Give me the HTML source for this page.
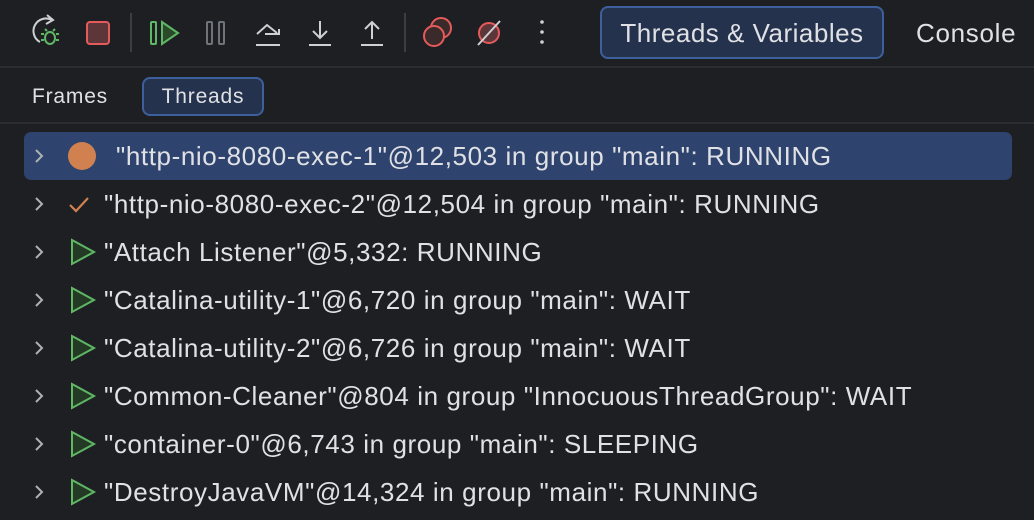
<!DOCTYPE html>
<html><head><style>
body{margin:0;width:1034px;height:520px;background:#1e1f22;overflow:hidden;font-family:"Liberation Sans",sans-serif;color:#dfe1e5;position:relative}
.a{position:absolute}
.sep{position:absolute;left:0;width:1034px;height:2px;background:#2b2d30}
.pill{position:absolute;background:#25324d;border:2px solid #3d5f9c;border-radius:8px;box-sizing:border-box;color:#dfe1e5;text-align:center}
.row{position:absolute;left:24px;width:988px;height:48px;font-size:26px;letter-spacing:0.6px;line-height:49px;white-space:nowrap}
.row.sel{background:#2e436e;border-radius:7px}
.row svg{position:absolute}
.row span{position:absolute;left:80px}
</style></head><body>
<svg class="a" style="left:0;top:0" width="580" height="66" fill="none" stroke-width="2">
<path d="M52 20 A10 10 0 1 0 40 42" stroke="#ced0d6"/><path d="M47 15 L53 20 L46 24" stroke="#ced0d6"/>
<ellipse cx="50" cy="38" rx="5" ry="6" stroke="#5fb865"/><path d="M44 34h-3M56 34h3M44 40h-3M56 40h3M47 31l-2-2M53 31l2-2" stroke="#5fb865"/>
<rect x="87" y="22" width="22" height="22" rx="3" fill="#5c3638" stroke="#e55b5b"/>
<line x1="131" y1="13" x2="131" y2="52" stroke="#3c3f41"/>
<rect x="151" y="22" width="5" height="22" rx="1" stroke="#5fb865"/><path d="M162 22 L178 33 L162 44Z" fill="#2a4a2a" stroke="#5fb865"/>
<rect x="207" y="22" width="5" height="22" rx="1" stroke="#6f737a"/><rect x="219" y="22" width="5" height="22" rx="1" stroke="#6f737a"/>
<path d="M257 34 L267 25 L277 33" stroke="#ced0d6"/><path d="M265 34 L279 34 L279 29" stroke="#ced0d6"/><line x1="256" y1="45" x2="280" y2="45" stroke="#ced0d6"/>
<path d="M320 21v17M313 31l7 7 7-7M309 45h22" stroke="#ced0d6"/>
<path d="M372 22v17M365 29l7-7 7 7M361 45h22" stroke="#ced0d6"/>
<line x1="405" y1="13" x2="405" y2="52" stroke="#3c3f41"/>
<circle cx="441" cy="28" r="10" fill="#3a2a2a" stroke="#e55b5b"/><circle cx="434" cy="36" r="10" fill="#3a2a2a" stroke="#e55b5b"/>
<circle cx="489" cy="33" r="10" fill="#5c3638" stroke="#e55b5b"/><line x1="478" y1="45" x2="500" y2="21" stroke="#ced0d6"/>
<circle cx="542" cy="22" r="1.8" fill="#ced0d6" stroke="none"/><circle cx="542" cy="32" r="1.8" fill="#ced0d6" stroke="none"/><circle cx="542" cy="42" r="1.8" fill="#ced0d6" stroke="none"/>
</svg>
<div class="pill" style="left:600px;top:6px;width:284px;height:53px;line-height:50px;font-size:26px;letter-spacing:0.5px">Threads &amp; Variables</div>
<div class="a" style="left:916px;top:6px;line-height:55px;font-size:26px;letter-spacing:0.7px">Console</div>
<div class="sep" style="top:66px"></div>
<div class="a" style="left:32px;top:78px;line-height:38px;font-size:21px;letter-spacing:0.8px">Frames</div>
<div class="pill" style="left:142px;top:77px;width:122px;height:39px;line-height:36px;font-size:21px;letter-spacing:0.8px">Threads</div>
<div class="sep" style="top:122px"></div>

<div class="row sel" style="top:132px"><svg width="80" height="48" fill="none" stroke-width="2"><path d="M12 18l6 6-6 6" stroke="#aeb1b6"/><circle cx="58" cy="24" r="14" fill="#d0814f"/></svg><span style="left:92px">"http-nio-8080-exec-1"@12,503 in group "main": RUNNING</span></div>
<div class="row" style="top:180px"><svg width="80" height="48" fill="none" stroke-width="2.2"><path d="M12 18l6 6-6 6" stroke="#aeb1b6" stroke-width="2"/><path d="M46 25l6 6 12-13" stroke="#d0814f"/></svg><span>"http-nio-8080-exec-2"@12,504 in group "main": RUNNING</span></div>
<div class="row" style="top:228px"><svg width="80" height="48" fill="none" stroke-width="2"><path d="M12 18l6 6-6 6" stroke="#aeb1b6"/><path d="M48 12L70 24L48 36Z" fill="#253a25" stroke="#5fb865"/></svg><span>"Attach Listener"@5,332: RUNNING</span></div>
<div class="row" style="top:276px"><svg width="80" height="48" fill="none" stroke-width="2"><path d="M12 18l6 6-6 6" stroke="#aeb1b6"/><path d="M48 12L70 24L48 36Z" fill="#253a25" stroke="#5fb865"/></svg><span>"Catalina-utility-1"@6,720 in group "main": WAIT</span></div>
<div class="row" style="top:324px"><svg width="80" height="48" fill="none" stroke-width="2"><path d="M12 18l6 6-6 6" stroke="#aeb1b6"/><path d="M48 12L70 24L48 36Z" fill="#253a25" stroke="#5fb865"/></svg><span>"Catalina-utility-2"@6,726 in group "main": WAIT</span></div>
<div class="row" style="top:372px"><svg width="80" height="48" fill="none" stroke-width="2"><path d="M12 18l6 6-6 6" stroke="#aeb1b6"/><path d="M48 12L70 24L48 36Z" fill="#253a25" stroke="#5fb865"/></svg><span>"Common-Cleaner"@804 in group "InnocuousThreadGroup": WAIT</span></div>
<div class="row" style="top:420px"><svg width="80" height="48" fill="none" stroke-width="2"><path d="M12 18l6 6-6 6" stroke="#aeb1b6"/><path d="M48 12L70 24L48 36Z" fill="#253a25" stroke="#5fb865"/></svg><span>"container-0"@6,743 in group "main": SLEEPING</span></div>
<div class="row" style="top:468px"><svg width="80" height="48" fill="none" stroke-width="2"><path d="M12 18l6 6-6 6" stroke="#aeb1b6"/><path d="M48 12L70 24L48 36Z" fill="#253a25" stroke="#5fb865"/></svg><span>"DestroyJavaVM"@14,324 in group "main": RUNNING</span></div>
</body></html>
